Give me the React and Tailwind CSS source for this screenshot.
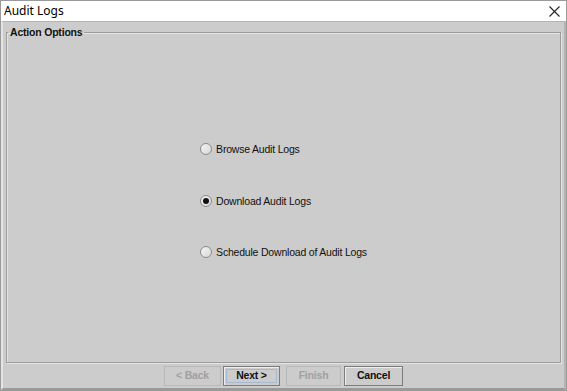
import React, { useState } from 'react';

const Radio = ({ label, checked, onSelect }) => (
  <label className="flex items-center gap-[4px] cursor-default" onClick={onSelect}>
    <span className="w-[12px] h-[12px] rounded-full border border-[#8a8a8a] bg-gradient-to-br from-[#f4f4f4] to-[#d8d8d8] flex items-center justify-center">
      {checked && <span className="w-[6px] h-[6px] rounded-full bg-[#111]" />}
    </span>
    <span className="text-[10.5px] tracking-[-0.2px] text-[#111] leading-[14px]">{label}</span>
  </label>
);

const WizButton = ({ children, disabled, focused, width }) => (
  <button
    disabled={disabled}
    className={
      (disabled
        ? 'h-[20px] p-[2px] border border-[#b8b8b8] bg-[#cccccc] text-[10.5px] font-bold text-[#a0a0a0] tracking-[-0.2px] '
        : 'h-[20px] p-[2px] border border-[#7c7c7c] bg-[#cccccc] text-[10.5px] font-bold text-[#111] tracking-[-0.2px] shadow-[inset_1px_1px_0_#eeeeee] ') + width
    }
  >
    <span className={focused ? 'h-full flex items-center justify-center border border-[#a8b8d0]' : 'h-full flex items-center justify-center border border-transparent'}>
      {children}
    </span>
  </button>
);

export default function App() {
  const [choice, setChoice] = useState('download');

  return (
    <div className="w-[567px] h-[391px] flex flex-col bg-[#cccccc] border border-[#9a9a9a] font-['Liberation_Sans',Arial,sans-serif] overflow-hidden">
      {/* Title bar */}
      <div className="h-[20px] bg-white flex items-center justify-between pl-[3px] pr-[6px] shrink-0">
        <span className="text-[12px] text-black font-['Noto_Sans',sans-serif]">Audit Logs</span>
        <svg width="11" height="11" viewBox="0 0 11 11" className="text-[#222]">
          <path d="M0.5 0.5L10.5 10.5M10.5 0.5L0.5 10.5" stroke="currentColor" strokeWidth="1.1" />
        </svg>
      </div>

      <div className="flex-1 flex flex-col border-t border-[#b4b4b4] border-l-[2px] border-l-[#e4e4e4] border-r-[2px] border-r-[#b4b4b4] border-b-[2px] border-b-[#9a9a9a]">
        {/* Group box */}
        <div className="px-[3px] pt-[4px]">
          <fieldset className="h-[337px] border border-[#9c9c9c] shadow-[1px_1px_0_#e4e4e4,inset_1px_1px_0_#e4e4e4] flex flex-col">
            <legend className="ml-[1px] px-[2px] text-[10.5px] font-bold tracking-[-0.2px] text-[#111] leading-[13px]">Action Options</legend>
            <div className="flex-1 flex items-center justify-center">
              <div className="flex flex-col items-start gap-[37.5px]">
                <Radio label="Browse Audit Logs" checked={choice === 'browse'} onSelect={() => setChoice('browse')} />
                <Radio label="Download Audit Logs" checked={choice === 'download'} onSelect={() => setChoice('download')} />
                <Radio label="Schedule Download of Audit Logs" checked={choice === 'schedule'} onSelect={() => setChoice('schedule')} />
              </div>
            </div>
          </fieldset>
        </div>

        {/* Buttons */}
        <div className="flex-1 flex items-start justify-center pt-[3px]">
          <WizButton disabled width="w-[57px]">&lt; Back</WizButton>
          <span className="w-[2px]" />
          <WizButton focused width="w-[57px]">Next &gt;</WizButton>
          <span className="w-[6px]" />
          <WizButton disabled width="w-[55px]">Finish</WizButton>
          <span className="w-[3px]" />
          <WizButton width="w-[59px]">Cancel</WizButton>
        </div>
      </div>
    </div>
  );
}
